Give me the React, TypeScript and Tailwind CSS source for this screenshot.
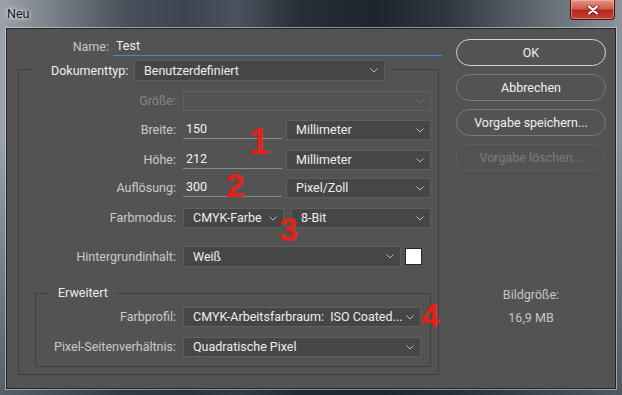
import React from "react";

function Chevron({ dim = false }: { dim?: boolean }) {
  return (
    <svg width="8" height="5" viewBox="0 0 8 5" className="shrink-0">
      <path d="M0.5 0.5 L4 4 L7.5 0.5" fill="none" stroke={dim ? "#6c6c6c" : "#b8b8b8"} strokeWidth="1" />
    </svg>
  );
}

function Select({ className, text, disabled = false }: { className: string; text?: string; disabled?: boolean }) {
  return (
    <div
      className={`${className} flex items-center justify-between border pl-[9px] pr-[6px] ${
        disabled ? "bg-[#535353] border-[#626262]" : "bg-[#464646] border-[#5e5e5e]"
      }`}
    >
      <span className="text-[#ededed] whitespace-pre leading-[16px]">{text}</span>
      <Chevron dim={disabled} />
    </div>
  );
}

function Field({ value, className }: { value: string; className: string }) {
  return (
    <div className={`${className} h-[19px] self-start flex items-center border-b border-[#8a8a8a] pl-[3px] text-[#f2f2f2]`}>
      {value}
    </div>
  );
}

function Label({ text, className = "w-[164px]", dim = false }: { text: string; className?: string; dim?: boolean }) {
  return (
    <div className={`${className} shrink-0 pr-[7px] text-right whitespace-nowrap ${dim ? "text-[#858585]" : "text-[#cacaca]"}`}>
      {text}
    </div>
  );
}

function Button({ text, primary = false, disabled = false }: { text: string; primary?: boolean; disabled?: boolean }) {
  return (
    <div
      className={`w-[150px] h-[27px] rounded-full border flex items-center justify-center ${
        primary
          ? "border-[#d6d6d6] text-[#f0f0f0]"
          : disabled
          ? "border-[#5f5f5f] text-[#7b7b7b]"
          : "border-[#7a7a7a] text-[#f0f0f0]"
      }`}
    >
      {text}
    </div>
  );
}

export default function App() {
  return (
    <div
      className="font-['Roboto',sans-serif] text-[12.5px] leading-[16px] relative w-[622px] h-[395px] overflow-hidden bg-[linear-gradient(180deg,rgba(0,0,0,0)_35%,rgba(25,40,55,0.55)_100%),linear-gradient(90deg,#9ba2a9_0%,#7a828a_8%,#48515a_20%,#3c454f_30%,#4b545e_38%,#262e37_48%,#1d252e_60%,#2f3740_72%,#5f676f_86%,#8d949b_100%)]"
    >
      {/* Title bar */}
      <div className="h-[28px] flex items-start justify-between">
        <div className="mt-[6px] ml-[7px] text-[#141414] [text-shadow:0_0_6px_rgba(255,255,255,0.9),0_0_3px_rgba(255,255,255,0.8)]">
          Neu
        </div>
        <div className="mr-[7px] w-[45px] h-[20px] rounded-b-[4px] border border-t-0 border-[#4a1410] bg-[linear-gradient(180deg,#e3968a_0%,#d25b4b_45%,#b52a1c_55%,#c6402f_100%)] shadow-[inset_0_0_0_1px_rgba(255,200,190,0.45)] flex items-center justify-center">
          <svg width="12" height="10" viewBox="0 0 12 10">
            <path d="M2 1.5 L10 8.5 M10 1.5 L2 8.5" stroke="#4a1a16" strokeWidth="4" strokeLinecap="round" opacity="0.6" />
            <path d="M2 1.5 L10 8.5 M10 1.5 L2 8.5" stroke="#ffffff" strokeWidth="2.2" strokeLinecap="round" />
          </svg>
        </div>
      </div>

      {/* Panel */}
      <div className="ml-[6px] w-[610px] h-[361px] bg-[#535353] border border-[#262626] shadow-[0_0_0_1px_rgba(215,225,235,0.55)] flex">
        {/* Left column */}
        <div className="w-[435px] shrink-0 flex flex-col">
          {/* Name */}
          <div className="mt-[8px] h-[19px] flex items-center">
            <div className="w-[106px] pr-[4px] text-right text-[#c8c8c8]">Name:</div>
            <div className="w-[329px] h-[19px] flex items-center border-b border-[#3d86e0] pl-[3px] text-[#f2f2f2]">Test</div>
          </div>

          {/* Outer group */}
          <div className="mt-[13px] ml-[11px] w-[421px] h-[306px] border border-[#3f3f3f] flex flex-col">
            {/* Legend */}
            <div className="-mt-[10px] ml-[13px] self-start h-[21px] flex items-center bg-[#535353] pl-[19px] pr-[6px]">
              <div className="w-[83px] text-[#efefef]">Dokumenttyp:</div>
              <Select className="w-[251px] h-[21px]" text="Benutzerdefiniert" />
            </div>

            <div className="mt-[10px] h-[20px] flex items-center">
              <Label text="Größe:" dim />
              <Select className="w-[248px] h-[20px]" disabled />
            </div>

            <div className="mt-[9px] h-[20px] flex items-center">
              <Label text="Breite:" />
              <Field value="150" className="w-[99px]" />
              <Select className="ml-[4px] w-[145px] h-[20px]" text="Millimeter" />
            </div>

            <div className="mt-[10px] h-[20px] flex items-center">
              <Label text="Höhe:" />
              <Field value="212" className="w-[99px]" />
              <Select className="ml-[4px] w-[145px] h-[20px]" text="Millimeter" />
            </div>

            <div className="mt-[8px] h-[20px] flex items-center">
              <Label text="Auflösung:" />
              <Field value="300" className="w-[99px]" />
              <Select className="ml-[4px] w-[145px] h-[20px]" text="Pixel/Zoll" />
            </div>

            <div className="mt-[10px] h-[20px] flex items-center">
              <Label text="Farbmodus:" />
              <Select className="w-[101px] h-[20px]" text="CMYK-Farbe" />
              <Select className="ml-[7px] w-[140px] h-[20px]" text="8-Bit" />
            </div>

            <div className="mt-[18px] h-[21px] flex items-center">
              <Label text="Hintergrundinhalt:" />
              <Select className="w-[218px] h-[21px]" text="Weiß" />
              <div className="ml-[4px] w-[17px] h-[17px] bg-white border border-[#262626]" />
            </div>

            {/* Inner group */}
            <div className="mt-[26px] ml-[16px] w-[396px] border border-[#3f3f3f] flex flex-col pb-[9px]">
              <div className="-mt-[9px] ml-[14px] self-start h-[16px] bg-[#535353] px-[8px] text-[#ececec]">Erweitert</div>
              <div className="mt-[6px] h-[20px] flex items-center">
                <Label text="Farbprofil:" className="w-[147px]" />
                <Select className="w-[238px] h-[20px]" text="CMYK-Arbeitsfarbraum:  ISO Coated..." />
              </div>
              <div className="mt-[10px] h-[20px] flex items-center">
                <Label text="Pixel-Seitenverhältnis:" className="w-[147px]" />
                <Select className="w-[238px] h-[20px]" text="Quadratische Pixel" />
              </div>
            </div>
          </div>
        </div>

        {/* Right column */}
        <div className="flex-1 flex flex-col pl-[14px]">
          <div className="mt-[10px] flex flex-col gap-[8px]">
            <Button text="OK" primary />
            <Button text="Abbrechen" />
            <Button text="Vorgabe speichern..." />
            <Button text="Vorgabe löschen..." disabled />
          </div>
          <div className="w-[150px] mt-[116px] text-center text-[#c6c6c6]">Bildgröße:</div>
          <div className="w-[150px] mt-[7px] text-center text-[#c6c6c6]">16,9 MB</div>
        </div>
      </div>

      {/* Red annotation numbers */}
      <div className="absolute left-[249px] top-[124px] font-['Liberation_Sans',sans-serif] font-bold text-[36px] leading-none text-[#e3231b]">1</div>
      <div className="absolute left-[226px] top-[168px] font-['Liberation_Sans',sans-serif] font-bold text-[34px] leading-none text-[#e3231b]">2</div>
      <div className="absolute left-[279px] top-[212px] font-['Liberation_Sans',sans-serif] font-bold text-[34px] leading-none text-[#e3231b]">3</div>
      <div className="absolute left-[421px] top-[298px] font-['Liberation_Sans',sans-serif] font-bold text-[34px] leading-none text-[#e3231b]">4</div>
    </div>
  );
}
